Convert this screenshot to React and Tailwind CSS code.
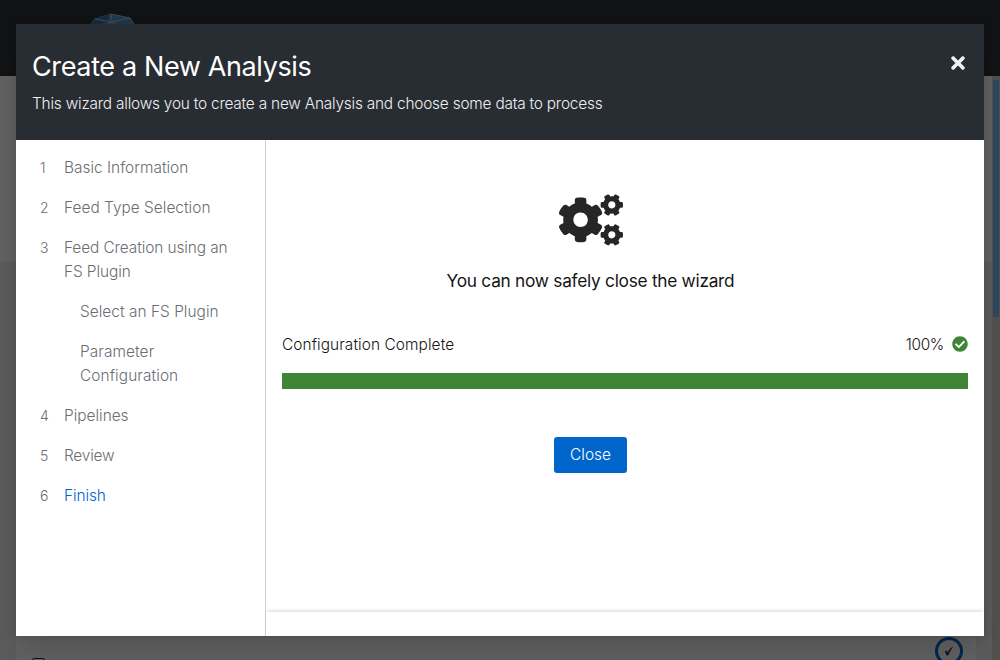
import { FaCogs, FaTimes, FaCheckCircle } from "react-icons/fa";

function Step({ n, children, active, track }) {
  return (
    <li className="flex pb-4 leading-6">
      <span className="h-6 w-10 shrink-0 pl-6 text-[14px] leading-6">{n}</span>
      <span className={(active ? "text-[#0066cc] " : "") + "ml-2 whitespace-nowrap " + track}>{children}</span>
    </li>
  );
}

function Backdrop() {
  return (
    <div className="flex h-full flex-col bg-[#f0f0f0]">
      <header className="h-[76px] shrink-0 bg-[#282d33] pl-[86px] pt-[13px]">
        <svg width="52" height="40" viewBox="0 0 52 40">
          <path d="M3 14 9 6 25 1 44 5 50 14 47 34 26 40 6 34Z" fill="#4a93c4" stroke="#aab4bb" strokeWidth="1" />
          <path d="M3 14 9 6 24 1 21 9 12 12Z" fill="#2f6fae" />
          <path d="M9 6 25 9 44 5M25 1 26 9 16 14M26 9 36 14" fill="none" stroke="#b5bec4" strokeWidth="1" />
        </svg>
      </header>
      <div className="flex min-h-0 flex-1">
        <main className="flex flex-1 flex-col">
          <section className="h-[186px] shrink-0 bg-white" />
          <section className="flex flex-1 items-end justify-between overflow-hidden px-4 pt-4">
            <div className="flex h-full w-full items-end justify-between overflow-hidden bg-white pl-4 pr-[13px]">
              <span className="-mb-[11px] h-[13px] w-[13px] rounded-[2px] border border-[#333] bg-white" />
              <span className="-mb-[5px] flex h-7 w-7 items-center justify-center rounded-full border-[3px] border-[#0066cc] text-[#333]">
                <svg width="10" height="10" viewBox="0 0 10 10">
                  <path d="M.8 5.3 2.5 4.5 3.7 6.4C5 3.8 6.7 1.7 9.3 .6 7.3 3.3 5.7 6 4.2 9.4H2.8Z" fill="currentColor" />
                </svg>
              </span>
            </div>
          </section>
        </main>
        <div className="w-2 bg-[#d2d2d2] px-px pt-1">
          <div className="h-[237px] bg-[#73bcf7]" />
        </div>
      </div>
    </div>
  );
}

export default function App() {
  return (
    <div className="relative h-[660px] w-[1000px] overflow-hidden font-['Inter','Liberation_Sans',sans-serif] text-[15.4px] font-[350] text-[#151515]">
      <Backdrop />
      <div className="absolute inset-0 bg-[rgba(3,3,3,0.62)] px-4 py-6">
        <div className="flex h-full flex-col bg-white shadow-[0_16px_32px_0_rgba(3,3,3,0.16),0_0_8px_0_rgba(3,3,3,0.1)]">
          <header className="flex h-[116px] shrink-0 justify-between bg-[#282d33] px-4 pt-6 text-white">
            <div className="pt-px">
              <h1 className="whitespace-nowrap text-[27px] font-normal leading-9 tracking-[-0.37px]">Create a New Analysis</h1>
              <p className="mt-[7px] whitespace-nowrap leading-6 tracking-[-0.21px] text-[#f0f0f0]">This wizard allows you to create a new Analysis and choose some data to process</p>
            </div>
            <button className="mr-[3px] mt-[5px] h-5" aria-label="Close wizard">
              <FaTimes className="h-5 w-[14px] text-[#f0f0f0]" />
            </button>
          </header>
          <div className="flex min-h-0 flex-1">
            <nav className="w-[250px] shrink-0 border-r border-[#d2d2d2] pt-4 text-[#6a6e73]">
              <ol>
                <Step n="1" track="tracking-[0.02px]">Basic Information</Step>
                <Step n="2" track="tracking-[0.03px]">Feed Type Selection</Step>
                <Step n="3" track="tracking-[-0.08px]">Feed Creation using an<br />FS Plugin</Step>
                <li className="pb-4 pl-16 leading-6 tracking-[0.04px]">Select an FS Plugin</li>
                <li className="pb-4 pl-16 leading-6 tracking-[0.1px]">Parameter<br />Configuration</li>
                <Step n="4" track="">Pipelines</Step>
                <Step n="5" track="tracking-[-0.2px]">Review</Step>
                <Step n="6" track="tracking-[-0.1px]" active>Finish</Step>
              </ol>
            </nav>
            <div className="flex flex-1 flex-col">
              <main className="flex flex-1 flex-col px-4">
                <div className="mr-[69px] flex flex-col items-center pt-[54px]">
                  <FaCogs className="h-[52px] w-16 text-[#262626]" />
                  <h2 className="mt-[21px] whitespace-nowrap text-[17.3px] font-normal leading-7 tracking-[-0.27px]">You can now safely close the wizard</h2>
                </div>
                <div className="mt-[37px] flex justify-between leading-6">
                  <span className="pt-px tracking-[0.09px]">Configuration Complete</span>
                  <span className="flex items-start gap-2"><span className="pt-px tracking-[-0.3px]">100%</span><FaCheckCircle size={16} className="mt-1 text-[#3e8635]" /></span>
                </div>
                <div className="mt-4 h-4 bg-[#3e8635]" />
                <div className="mr-[69px] mt-12 flex justify-center">
                  <button className="h-9 w-[73px] rounded-[3px] bg-[#0066cc] text-white">Close</button>
                </div>
              </main>
              <footer className="h-6 shadow-[0_-2px_4px_-1px_rgba(3,3,3,0.16)]" />
            </div>
          </div>
        </div>
      </div>
    </div>
  );
}
